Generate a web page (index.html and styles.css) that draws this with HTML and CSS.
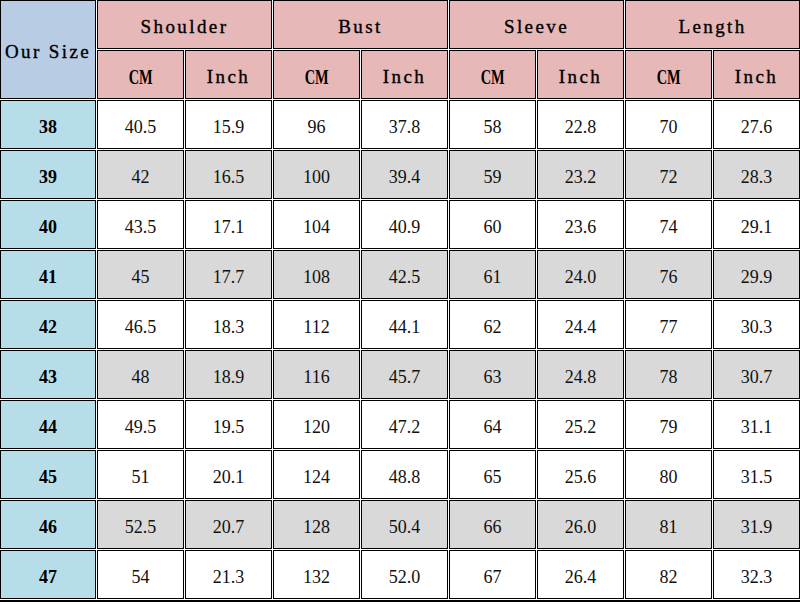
FILE: index.html
```html
<!DOCTYPE html>
<html>
<head>
<meta charset="utf-8">
<link rel="stylesheet" href="styles.css">
</head>
<body>
<table class="size-table">
  <thead>
    <tr class="row">
      <th class="corner" rowspan="2">Our Size</th>
      <th class="group" colspan="2">Shoulder</th>
      <th class="group" colspan="2">Bust</th>
      <th class="group" colspan="2">Sleeve</th>
      <th class="group" colspan="2">Length</th>
    </tr>
    <tr class="row">
      <th class="unit cm"><span class="narrow">CM</span></th><th class="unit">Inch</th>
      <th class="unit cm"><span class="narrow">CM</span></th><th class="unit">Inch</th>
      <th class="unit cm"><span class="narrow">CM</span></th><th class="unit">Inch</th>
      <th class="unit cm"><span class="narrow">CM</span></th><th class="unit">Inch</th>
    </tr>
  </thead>
  <tbody>
    <tr class="row"><td class="size">38</td><td>40.5</td><td>15.9</td><td>96</td><td>37.8</td><td>58</td><td>22.8</td><td>70</td><td>27.6</td></tr>
    <tr class="row alt"><td class="size">39</td><td>42</td><td>16.5</td><td>100</td><td>39.4</td><td>59</td><td>23.2</td><td>72</td><td>28.3</td></tr>
    <tr class="row"><td class="size">40</td><td>43.5</td><td>17.1</td><td>104</td><td>40.9</td><td>60</td><td>23.6</td><td>74</td><td>29.1</td></tr>
    <tr class="row alt"><td class="size">41</td><td>45</td><td>17.7</td><td>108</td><td>42.5</td><td>61</td><td>24.0</td><td>76</td><td>29.9</td></tr>
    <tr class="row"><td class="size">42</td><td>46.5</td><td>18.3</td><td>112</td><td>44.1</td><td>62</td><td>24.4</td><td>77</td><td>30.3</td></tr>
    <tr class="row alt"><td class="size">43</td><td>48</td><td>18.9</td><td>116</td><td>45.7</td><td>63</td><td>24.8</td><td>78</td><td>30.7</td></tr>
    <tr class="row"><td class="size">44</td><td>49.5</td><td>19.5</td><td>120</td><td>47.2</td><td>64</td><td>25.2</td><td>79</td><td>31.1</td></tr>
    <tr class="row"><td class="size">45</td><td>51</td><td>20.1</td><td>124</td><td>48.8</td><td>65</td><td>25.6</td><td>80</td><td>31.5</td></tr>
    <tr class="row alt"><td class="size">46</td><td>52.5</td><td>20.7</td><td>128</td><td>50.4</td><td>66</td><td>26.0</td><td>81</td><td>31.9</td></tr>
    <tr class="row"><td class="size">47</td><td>54</td><td>21.3</td><td>132</td><td>52.0</td><td>67</td><td>26.4</td><td>82</td><td>32.3</td></tr>
  </tbody>
</table>
</body>
</html>
```

FILE: styles.css
```css
html, body {
  margin: 0;
  padding: 0;
  background: #ffffff;
  overflow: hidden;
}

.size-table {
  border-collapse: separate;
  border-spacing: 1px;
  margin: -1px 0 0 -1px;
  table-layout: fixed;
  width: 802px;
  border-bottom: 2px solid #000;
}

.size-table th,
.size-table td {
  border: 1px solid #000;
  padding: 5px 0 0 0;
  text-align: center;
  vertical-align: middle;
  color: #000;
  overflow: hidden;
  white-space: nowrap;
}

.row {
  height: 49px;
}

.size-table th {
  font-family: "Liberation Serif", "Times New Roman", serif;
  font-size: 19px;
  font-weight: normal;
  letter-spacing: 2.4px;
  color: #000;
  -webkit-text-stroke: 0.35px #000;
}

.corner {
  width: 94px;
  background: #b8cce4;
}

.group {
  background: #e6b8b7;
}

.unit {
  width: 85px;
  background: #e6b8b7;
}

.size-table th.cm {
  font-weight: bold;
  font-size: 20px;
  letter-spacing: 0;
  -webkit-text-stroke: 0;
}

.narrow {
  display: inline-block;
  transform: scaleX(0.72);
}

.size-table td {
  font-family: "Liberation Serif", "Times New Roman", serif;
  font-size: 18px;
  background: #ffffff;
  color: #111;
}

.size-table .alt td {
  background: #d9d9d9;
}

.size-table td.size,
.size-table .alt td.size {
  background: #b7dee8;
  font-weight: bold;
  color: #000;
}
```
